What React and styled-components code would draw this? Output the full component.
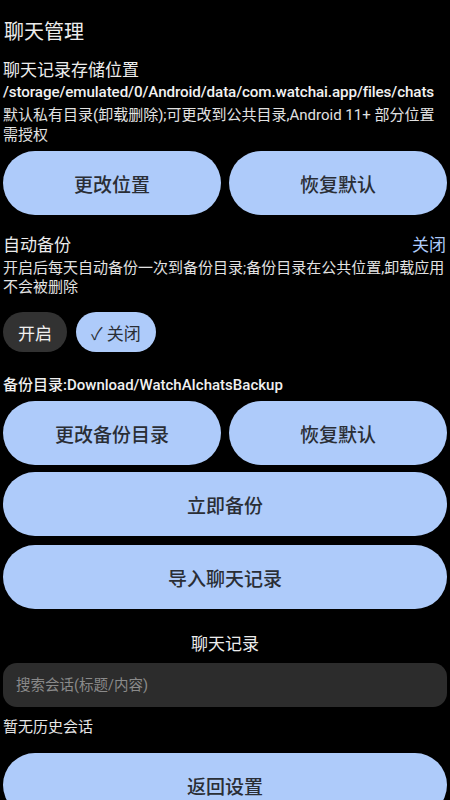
import React from "react";
import styled, { createGlobalStyle } from "styled-components";

const GlobalStyle = createGlobalStyle`
  html, body {
    margin: 0;
    padding: 0;
    background: #000;
  }
  body {
    font-family: Roboto, "Noto Sans CJK SC", sans-serif;
    color: #ececec;
  }
`;

const Page = styled.div`
  width: 450px;
  height: 800px;
  overflow: hidden;
  box-sizing: border-box;
  padding: 19px 3px 0;
  display: flex;
  flex-direction: column;
  background: #000;
`;

const Title = styled.h1`
  margin: 0 0 0 1px;
  font-size: 20px;
  line-height: 26px;
  font-weight: 400;
  color: #ececec;
`;

const SectionTitle = styled.div`
  margin-top: ${({ $top }) => $top || 0}px;
  font-size: 17px;
  line-height: 24px;
  color: #ececec;
`;

const PathText = styled.div`
  font-size: 15.2px;
  line-height: 20px;
  font-weight: 500;
  color: #f2f2f2;
  white-space: nowrap;
  letter-spacing: -0.1px;
`;

const Desc = styled.div`
  margin-top: ${({ $top }) => $top || 0}px;
  font-size: 15px;
  line-height: ${({ $lh }) => $lh || 20}px;
  color: #e2e2e2;
`;

const Row = styled.div`
  display: flex;
  gap: 8px;
  margin-top: ${({ $top }) => $top || 0}px;

  & > button {
    flex: 1 1 0;
  }
`;

const PillButton = styled.button`
  flex: none;
  height: 64px;
  border: none;
  border-radius: 32px;
  background: #aecbfa;
  color: #2a2e35;
  font-family: Roboto, "Noto Sans CJK SC", sans-serif;
  font-size: 19px;
  font-weight: 500;
  cursor: pointer;
  margin-top: ${({ $top }) => $top || 0}px;
`;

const SwitchRow = styled.div`
  display: flex;
  justify-content: space-between;
  align-items: center;
  margin-top: 19px;
  font-size: 17px;
  line-height: 22px;
`;

const StateText = styled.span`
  color: #aecbfa;
  margin-right: 1px;
`;

const Chips = styled.div`
  display: flex;
  gap: 9px;
  margin-top: 15px;
`;

const Chip = styled.button`
  height: 40px;
  padding: 0 15px;
  border: none;
  border-radius: 20px;
  font-family: Roboto, "Noto Sans CJK SC", sans-serif;
  font-size: 17px;
  background: ${({ $active }) => ($active ? "#aecbfa" : "#323232")};
  color: ${({ $active }) => ($active ? "#2a2e35" : "#f0f0f0")};
`;

const DirText = styled.div`
  margin-top: 23px;
  font-size: 15px;
  line-height: 20px;
  font-weight: 500;
  color: #f0f0f0;
`;

const CenterTitle = styled.div`
  margin-top: 24px;
  text-align: center;
  font-size: 17px;
  line-height: 22px;
  color: #ececec;
`;

const Search = styled.input`
  flex: none;
  margin-top: 8px;
  height: 44px;
  border: none;
  border-radius: 14px;
  background: #2c2c2c;
  padding: 0 13px;
  font-family: Roboto, "Noto Sans CJK SC", sans-serif;
  font-size: 14.5px;
  color: #eee;
  outline: none;
  &::placeholder {
    color: #8a8a8a;
  }
`;

const Empty = styled.div`
  margin-top: 10px;
  font-size: 15px;
  line-height: 20px;
  color: #e6e6e6;
`;

export default function App() {
  return (
    <>
      <GlobalStyle />
      <Page>
        <Title>聊天管理</Title>
        <SectionTitle $top={13}>聊天记录存储位置</SectionTitle>
        <PathText>/storage/emulated/0/Android/data/com.watchai.app/files/chats</PathText>
        <Desc $top={3}>默认私有目录(卸载删除);可更改到公共目录,Android 11+ 部分位置需授权</Desc>
        <Row $top={6}>
          <PillButton>更改位置</PillButton>
          <PillButton>恢复默认</PillButton>
        </Row>
        <SwitchRow>
          <span>自动备份</span>
          <StateText>关闭</StateText>
        </SwitchRow>
        <Desc $top={3} $lh={19}>开启后每天自动备份一次到备份目录;备份目录在公共位置,卸载应用不会被删除</Desc>
        <Chips>
          <Chip>开启</Chip>
          <Chip $active>✓ 关闭</Chip>
        </Chips>
        <DirText>备份目录:Download/WatchAIchatsBackup</DirText>
        <Row $top={6}>
          <PillButton>更改备份目录</PillButton>
          <PillButton>恢复默认</PillButton>
        </Row>
        <PillButton $top={7}>立即备份</PillButton>
        <PillButton $top={9}>导入聊天记录</PillButton>
        <CenterTitle>聊天记录</CenterTitle>
        <Search placeholder="搜索会话(标题/内容)" />
        <Empty>暂无历史会话</Empty>
        <PillButton $top={16}>返回设置</PillButton>
      </Page>
    </>
  );
}
